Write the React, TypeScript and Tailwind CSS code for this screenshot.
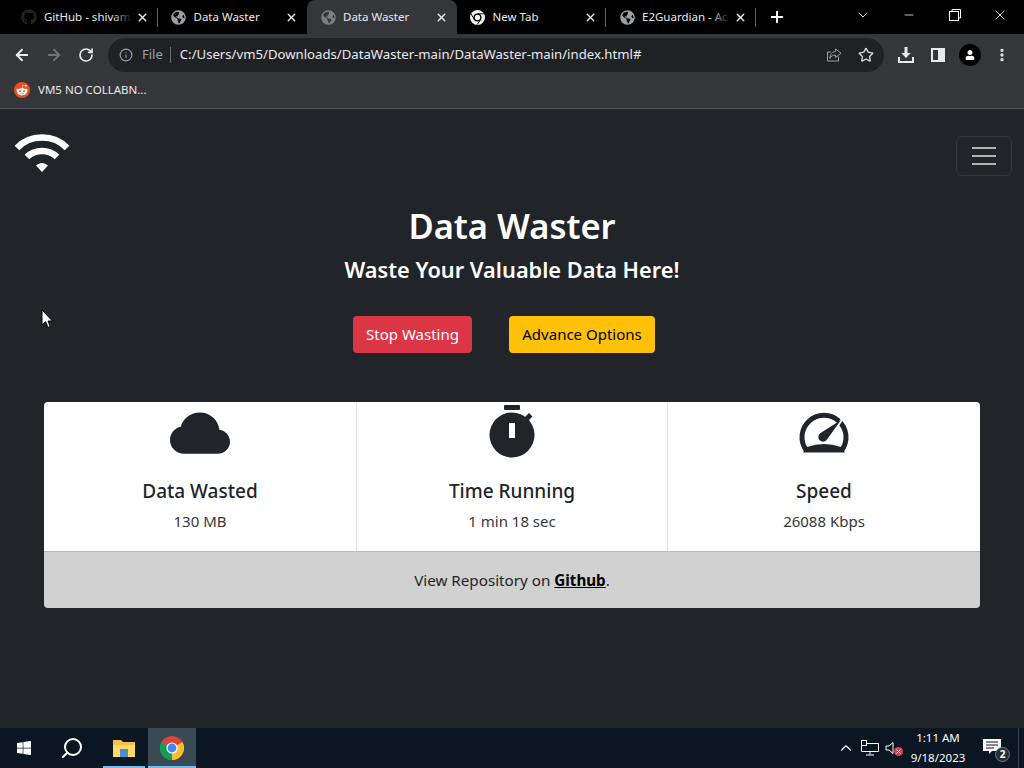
import { ArrowLeft, ArrowRight, ChevronDown, ChevronUp, Info, Minus, MoreVertical, Plus, RotateCw, Search, Star, X } from "lucide-react";
import { FaGithub, FaGlobeAmericas, FaRedditAlien, FaUser, FaWindows } from "react-icons/fa";

function ChromeLogo({ size }: { size: number }) {
  return (
    <svg width={size} height={size} viewBox="0 0 24 24">
      <circle cx="12" cy="12" r="12" fill="#db4437" />
      <path d="M12 12 1.6 6 A12 12 0 0 0 12 24 Z" fill="#0f9d58" />
      <path d="M12 12 22.4 6 A12 12 0 0 1 12 24 Z" fill="#fbc02d" />
      <circle cx="12" cy="12" r="5.6" fill="#fff" />
      <circle cx="12" cy="12" r="4.4" fill="#4285f4" />
    </svg>
  );
}

// the New Tab favicon is the plain white version of the logo
function ChromeMono({ size }: { size: number }) {
  return (
    <svg width={size} height={size} viewBox="0 0 24 24">
      <circle cx="12" cy="12" r="12" fill="#f1f3f4" />
      <circle cx="12" cy="12" r="6.5" fill="#000" />
      <circle cx="12" cy="12" r="4.3" fill="#f1f3f4" />
      <path d="M12 6H23M6.800 15 1.500 6M17.200 15 11.500 23.500" stroke="#000" strokeWidth="1.4" />
    </svg>
  );
}

function Tab({ title, icon, active, fade, sep }: { title: string; icon: React.ReactNode; active?: boolean; fade?: boolean; sep?: boolean }) {
  return (
    <div className={`relative flex h-full w-[149.5px] shrink-0 items-center pl-[13px] pr-[9px] ${active ? "rounded-t-lg bg-[#35363a]" : ""}`}>
      <div className="flex w-4 shrink-0 items-center justify-center">{icon}</div>
      <div className="relative ml-[7px] min-w-0 flex-1 overflow-hidden whitespace-nowrap text-[11.5px] text-[#e8eaed]">
        {title}
        {fade && <div className="absolute inset-y-0 right-0 w-5 bg-gradient-to-r from-transparent to-black" />}
      </div>
      <X size={13} strokeWidth={2.5} className="ml-1 shrink-0 text-[#e8eaed]" />
      {sep && <div className="absolute right-0 top-2 h-[19px] w-px bg-[#5f6368]" />}
    </div>
  );
}

function WifiLogo() {
  return (
    <svg width="56" height="42" viewBox="0 0 56 42" fill="none" stroke="#fff" strokeWidth="6.5">
      <path d="M3 16 C16 2 40 2 53 16" />
      <path d="M13 25 C21 17 35 17 43 25" />
      <path d="M22 33.5 L28 40 L34 33.5 C30 30 26 30 22 33.5 Z" fill="#fff" stroke="none" />
    </svg>
  );
}

function CloudIcon() {
  return (
    <svg width="60" height="60" viewBox="0 0 16 16" fill="#212529">
      <path d="M4.406 3.342A5.53 5.53 0 0 1 8 2c2.69 0 4.923 2 5.166 4.579C14.758 6.804 16 8.137 16 9.773 16 11.569 14.502 13 12.687 13H3.781C1.708 13 0 11.366 0 9.318c0-1.763 1.266-3.223 2.942-3.593.143-.863.698-1.723 1.464-2.383z" />
    </svg>
  );
}

function StopwatchIcon() {
  return (
    <svg width="60" height="60" viewBox="0 0 60 60" fill="#212529">
      <rect x="22" y="0" width="16" height="5" rx="1" />
      <circle cx="30" cy="30" r="22.5" />
      <path d="M42 13 L47 8 L50.5 11.5 L45.5 16.5 Z" />
      <rect x="27" y="18" width="6" height="15" fill="#fff" />
    </svg>
  );
}

function SpeedIcon() {
  return (
    <svg width="60" height="60" viewBox="0 0 60 60" fill="#212529">
      <path d="M12 45 A22 22 0 1 1 48 45" fill="none" stroke="#212529" strokeWidth="5" />
      <path d="M9 47.500 H51 L47 42 Q30 36 13 42 Z" />
      <path d="M44 20 L51 10" stroke="#fff" strokeWidth="2.500" />
      <path d="M47 15 L33 34.500 A4.700 4.700 0 1 1 26.500 28 Z" />
    </svg>
  );
}

function Stat({ icon, title, value, className }: { icon: React.ReactNode; title: string; value: string; className: string }) {
  return (
    <div className={`flex h-full flex-col items-center pt-[3px] ${className}`}>
      <div className="h-[60px]">{icon}</div>
      <div className="mt-[14px] text-[19px] font-medium leading-[24px] text-[#212529]">{title}</div>
      <div className="mt-[7px] text-[15px] leading-[22px] text-[#33383c]">{value}</div>
    </div>
  );
}

export default function App() {
  return (
    <div className="relative flex h-screen w-full flex-col overflow-hidden bg-[#212529] font-['Noto_Sans',sans-serif]">
      {/* browser chrome */}
      <div className="flex h-[34px] items-end bg-black pl-2">
        <Tab title="GitHub - shivam" icon={<FaGithub size={16} className="text-[#222]" />} fade sep />
        <Tab title="Data Waster" icon={<FaGlobeAmericas size={15} className="text-[#9aa0a6]" />} />
        <Tab title="Data Waster" icon={<FaGlobeAmericas size={15} className="text-[#7c8085]" />} active />
        <Tab title="New Tab" icon={<ChromeMono size={15} />} sep />
        <Tab title="E2Guardian - Ac" icon={<FaGlobeAmericas size={15} className="text-[#9aa0a6]" />} fade sep />
        <Plus size={18} strokeWidth={2.5} className="ml-[12px] mb-2 text-white" />
        <div className="flex flex-1 items-center pb-[11px] text-white">
          <ChevronDown size={16} strokeWidth={1.25} className="ml-[69px]" />
          <Minus size={14} strokeWidth={1.25} className="ml-[31px]" />
          <svg width="12" height="12" viewBox="0 0 12 12" fill="none" stroke="#fff" strokeWidth="1" className="ml-[33px]">
            <path d="M3 2.500V0.500H11.500V9H9.500" />
            <rect x="0.500" y="2.500" width="9" height="9" />
          </svg>
          <X size={16} strokeWidth={1.25} className="ml-[31px]" />
        </div>
      </div>
      <div className="flex h-[38px] items-center bg-[#35363a] pl-[13px] pr-[13px] pt-[4px] text-[#e8eaed]">
        <ArrowLeft size={18} strokeWidth={2.5} />
        <ArrowRight size={18} strokeWidth={2.5} className="ml-[14px] text-[#6f7175]" />
        <RotateCw size={16} strokeWidth={2.5} className="ml-[15px]" />
        <div className="ml-[14px] flex h-[34px] w-[776px] items-center rounded-full bg-[#202124] pl-[11px] pr-[10px]">
          <Info size={14} className="text-[#9aa0a6]" />
          <span className="ml-[9px] text-[13px] text-[#9aa0a6]">File</span>
          <span className="ml-[7px] h-[16px] w-px bg-[#6f7175]" />
          <span className="ml-[9px] flex-1 whitespace-nowrap text-[13.16px]">C:/Users/vm5/Downloads/DataWaster-main/DataWaster-main/index.html#</span>
          <svg width="16" height="16" viewBox="0 0 16 16" fill="none" stroke="#9aa0a6" strokeWidth="1" className="mr-[16px]">
            <path d="M12.5 9.5V14H1.5V5H5" />
            <path d="M9.5 2 L15 6.2 L9.5 10.5 V8 C7 8 5 9 3.8 11.5 C4 7.5 6 4.8 9.5 4.5 Z" />
          </svg>
          <Star size={16} className="text-[#dadce0]" />
        </div>
        <svg width="16" height="16" viewBox="0 0 16 16" fill="#e8eaed" className="ml-[14px]">
          <path d="M6.5 0h3v6h3.2L8 11 3.300 6h3.200z" />
          <path d="M0 10h2v4h12v-4h2v6H0z" />
        </svg>
        <div className="ml-[17px] flex h-[14px] w-[14px] justify-end border-2 border-[#e8eaed]">
          <div className="h-full w-[5px] bg-[#e8eaed]" />
        </div>
        <div className="ml-[14px] flex h-[22px] w-[22px] items-center justify-center rounded-full bg-black">
          <FaUser size={10} className="text-white" />
        </div>
        <MoreVertical size={16} strokeWidth={3} className="ml-[13px]" />
      </div>
      <div className="flex h-[37px] items-center border-b border-[#55565a] bg-[#35363a] pl-[14px] text-[11.5px] text-[#e8eaed]">
        <div className="flex h-4 w-4 items-center justify-center rounded-full bg-[#e8501f]">
          <FaRedditAlien size={12} className="text-white" />
        </div>
        <span className="ml-2">VM5 NO COLLABN...</span>
      </div>

      {/* page */}
      <div className="flex flex-1 flex-col">
        <div className="flex items-start justify-between pl-[14px] pr-3 pt-[23px]">
          <WifiLogo />
          <div className="mt-[4px] flex h-10 w-14 flex-col items-center justify-center gap-[6px] rounded-md border border-[#33373c]">
            <div className="h-[2px] w-[24px] bg-[#b0b1b2]" />
            <div className="h-[2px] w-[24px] bg-[#b0b1b2]" />
            <div className="h-[2px] w-[24px] bg-[#b0b1b2]" />
          </div>
        </div>
        <h1 className="mt-[26px] text-center text-[34.5px] font-semibold leading-[48px] text-white">Data Waster</h1>
        <h2 className="mt-[5px] text-center text-[21.75px] font-semibold leading-[30px] text-white">Waste Your Valuable Data Here!</h2>
        <div className="mt-[31px] flex items-center pl-[353px]">
          <button className="h-[37px] w-[119px] rounded bg-[#dc3545] text-[15px] text-white">Stop Wasting</button>
          <button className="ml-[37px] h-[37px] w-[146px] rounded bg-[#ffc107] text-[15px] text-black">Advance Options</button>
        </div>
        <div className="mx-[44px] mt-[49px] w-[936px]">
          <div className="flex h-[149px] rounded-t bg-white">
            <Stat icon={<CloudIcon />} title="Data Wasted" value="130 MB" className="w-[312px]" />
            <Stat icon={<StopwatchIcon />} title="Time Running" value="1 min 18 sec" className="w-[311px] border-l border-[#dfdfdf]" />
            <Stat icon={<SpeedIcon />} title="Speed" value="26088 Kbps" className="w-[313px] border-l border-[#dfdfdf]" />
          </div>
          <div className="flex h-[57px] items-center justify-center rounded-b border-t border-[#b9b9b9] bg-[#d1d1d1] text-[15.2px] text-[#212529]">
            <span>
              View Repository on <a href="#" className="font-bold text-black underline">Github</a>.
            </span>
          </div>
        </div>
      </div>

      {/* taskbar */}
      <div className="flex h-[40px] items-center bg-[#0a1722] text-white">
        <FaWindows size={16} className="ml-4" />
        <Search size={24} strokeWidth={2} className="ml-[28px] -scale-x-100" />
        <div className="relative ml-[16px] flex h-full w-12 items-center justify-center">
          <svg width="22" height="18" viewBox="0 0 22 18">
            <path d="M0 1h8l2 2h12v15H0z" fill="#f2c14e" />
            <path d="M0 6h22v12H0z" fill="#ffd966" />
            <path d="M7 10h8v8H7z" fill="#4a8fc9" />
          </svg>
          <div className="absolute inset-x-[3px] bottom-0 h-[2px] bg-[#76b9ed]" />
        </div>
        <div className="relative flex h-full w-12 items-center justify-center bg-[#3a4a55]">
          <ChromeLogo size={24} />
          <div className="absolute inset-x-0 bottom-0 h-[2px] bg-[#76b9ed]" />
        </div>
        <div className="flex-1" />
        <ChevronUp size={18} strokeWidth={1.5} className="mr-[6px]" />
        <svg width="18" height="16" viewBox="0 0 18 16" fill="none" stroke="#fff" strokeWidth="1" className="mr-[6px]">
          <path d="M5.500 3.500H17.500V11.500H0.500V6" />
          <path d="M9 11.500V14.500M5 15H13" />
          <rect x="0.500" y="0.500" width="5" height="5" />
        </svg>
        <div className="relative h-[16px] w-[18px]">
          <svg width="12" height="14" viewBox="0 0 12 14" fill="none" stroke="#fff" strokeWidth="1" className="mt-px">
            <path d="M1 5H4L8 1.500V12.500L4 9H1Z" />
          </svg>
          <div className="absolute bottom-0 right-0 flex h-[9px] w-[9px] items-center justify-center rounded-full bg-[#d9404f]">
            <X size={7} strokeWidth={3} />
          </div>
        </div>
        <div className="w-[70px] text-center text-[11.5px] leading-[20px]">
          <div>1:11 AM</div>
          <div>9/18/2023</div>
        </div>
        <div className="relative ml-[10px] mr-[11px] h-[24px] w-[24px]">
          <svg width="18" height="16" viewBox="0 0 18 16" fill="#fff" className="mt-[3px]">
            <path d="M0 0h18v12H9l-3 3v-3H0z" />
            <path d="M3 3h12M3 6h12M3 9h8" stroke="#0a1722" strokeWidth="1" />
          </svg>
          <div className="absolute -bottom-[2px] right-[-3px] flex h-[15px] w-[15px] items-center justify-center rounded-full border border-[#777] bg-[#22303a] text-[10px] font-bold">2</div>
        </div>
        <div className="mr-[5px] h-full w-px bg-[#3a4650]" />
      </div>

      {/* mouse pointer in the capture */}
      <svg width="12" height="20" viewBox="0 0 12 20" className="absolute left-[41px] top-[309px]">
        <path d="M1 1V16L4.600 12.700L7 18.500L9.300 17.500L7 12H11.500Z" fill="#fff" stroke="#000" strokeWidth="1" />
      </svg>
    </div>
  );
}
